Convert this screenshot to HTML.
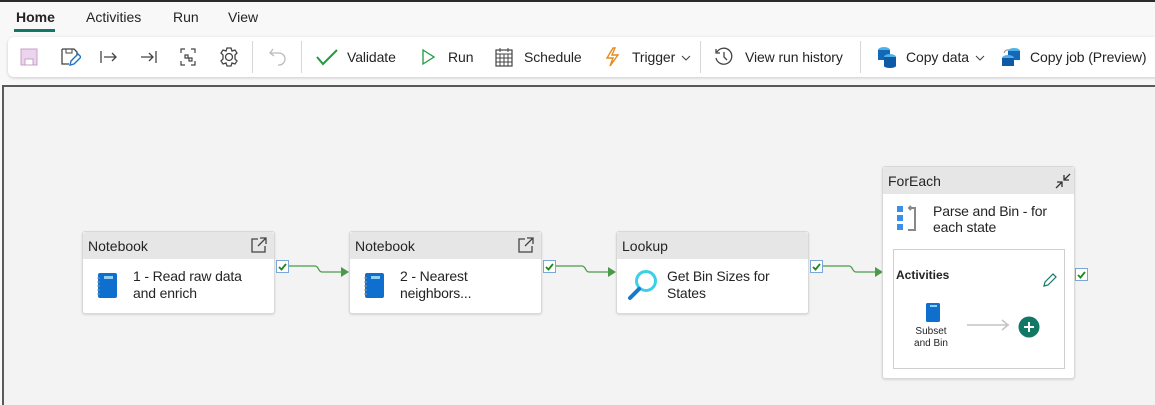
<!DOCTYPE html>
<html><head><meta charset="utf-8"><style>
*{box-sizing:border-box;margin:0;padding:0}
body{width:1155px;height:405px;overflow:hidden;background:#f8f8f8;font-family:"Liberation Sans",sans-serif;color:#242424;position:relative}
.abs{position:absolute}
.tab{position:absolute;top:9px;font-size:14px}
.tb{position:absolute;left:8px;top:37px;width:1160px;height:40px;background:#fff;border-radius:6px;box-shadow:0 1px 3px rgba(0,0,0,.18)}
.lbl{position:absolute;top:12px;font-size:14px;color:#242424;letter-spacing:-0.1px}
.sep{position:absolute;top:4px;width:1px;height:32px;background:#d6d6d6}
.canvas{position:absolute;left:2px;top:85px;width:1153px;height:320px;background:#f3f3f3;border-top:2px solid #5a5a5a;border-left:2px solid #5a5a5a}
.node{position:absolute;background:#fff;border:1px solid #d8d8d8;border-radius:3px;box-shadow:0 1px 2px rgba(0,0,0,.12)}
.hd{height:27px;background:#e6e6e6;font-size:14px;padding:6px 0 0 5px;border-radius:3px 3px 0 0}
.txt{position:absolute;left:50px;top:36px;font-size:14px;line-height:17px;letter-spacing:-0.15px}
.chk{position:absolute;width:13px;height:13px;border:1px solid #7aa7d8;background:#fff}
</style></head><body>
<div class="abs" style="left:0;top:0;width:1155px;height:2px;background:#2b2b2b"></div>
<div class="tab" style="left:16px;font-weight:bold">Home</div>
<div class="abs" style="left:14px;top:29px;width:41px;height:3px;background:#117865"></div>
<div class="tab" style="left:86px">Activities</div>
<div class="tab" style="left:173px">Run</div>
<div class="tab" style="left:228px">View</div>
<div class="tb">
<svg class="abs" style="left:11px;top:10px" width="20" height="20"><rect x="2" y="2" width="16" height="16" fill="#ecd4ec" stroke="#c9a0c9"/><rect x="6" y="12" width="8" height="6" fill="#fff" stroke="#c9a0c9"/></svg>
<svg class="abs" style="left:51px;top:9px" width="22" height="22"><path d="M3 3h12l3 3v5M3 3v15h7" fill="none" stroke="#444" stroke-width="1.3"/><path d="M7 3v4h6V3" fill="none" stroke="#444"/><path d="M11 19l1-4 7-7 3 3-7 7z" fill="#fff" stroke="#1a73c8" stroke-width="1.4"/></svg>
<svg class="abs" style="left:91px;top:12px" width="20" height="16"><path d="M2 2v12M5 8h12M13 4l4 4-4 4" fill="none" stroke="#444" stroke-width="1.3"/></svg>
<svg class="abs" style="left:131px;top:12px" width="20" height="16"><path d="M17 2v12M2 8h12M10 4l4 4-4 4" fill="none" stroke="#444" stroke-width="1.3"/></svg>
<svg class="abs" style="left:171px;top:10px" width="18" height="20"><path d="M2 6V2h4M12 2h4v4M2 14v4h4M16 14v4h-4M6 8h3v3H6zM10 11h3v3h-3z" fill="none" stroke="#444" stroke-width="1.2"/></svg>
<svg class="abs" style="left:210px;top:9px" width="22" height="22"><circle cx="11" cy="11" r="3.5" fill="none" stroke="#444" stroke-width="1.3"/><path d="M9 2h4l1 3 3-1 2 3-2 2v4l2 2-2 3-3-1-1 3H9l-1-3-3 1-2-3 2-2V9L3 7l2-3 3 1z" fill="none" stroke="#444" stroke-width="1.3"/></svg>
<div class="sep" style="left:244px"></div>
<svg class="abs" style="left:260px;top:9px" width="20" height="22"><path d="M5 3L2 7l4 3M2 7h9a6 6 0 0 1 0 12h-1" fill="none" stroke="#bbb" stroke-width="1.3"/></svg>
<div class="sep" style="left:293px"></div>
<svg class="abs" style="left:307px;top:10px" width="24" height="20"><path d="M2 10l6 7L22 3" fill="none" stroke="#1f9c3f" stroke-width="2"/></svg>
<div class="lbl" style="left:339px">Validate</div>
<svg class="abs" style="left:412px;top:10px" width="16" height="20"><path d="M3 3v14l11-7z" fill="none" stroke="#1f9c3f" stroke-width="1.3"/></svg>
<div class="lbl" style="left:440px">Run</div>
<svg class="abs" style="left:486px;top:9px" width="20" height="22"><rect x="2" y="4" width="16" height="16" fill="none" stroke="#444" stroke-width="1.2"/><path d="M2 8h16M2 12h16M2 16h16M6 8v12M10 8v12M14 8v12M6 2v4M14 2v4" stroke="#444" stroke-width="1"/></svg>
<div class="lbl" style="left:516px">Schedule</div>
<svg class="abs" style="left:595px;top:9px" width="18" height="22"><path d="M10 2L4 12h6l-3 8 8-11H9l3-7z" fill="none" stroke="#e88a1a" stroke-width="1.4"/></svg>
<div class="lbl" style="left:624px">Trigger</div>
<svg class="abs" style="left:673px;top:17px" width="10" height="8"><path d="M1 2l4 4 4-4" fill="none" stroke="#444" stroke-width="1.1"/></svg>
<div class="sep" style="left:692px"></div>
<svg class="abs" style="left:705px;top:9px" width="22" height="22"><path d="M4 6a8 8 0 1 1-1 6M3 3v4h4M11 6v5l3 3" fill="none" stroke="#444" stroke-width="1.3"/></svg>
<div class="lbl" style="left:737px">View run history</div>
<div class="sep" style="left:852px"></div>
<svg class="abs" style="left:868px;top:8px" width="22" height="24"><ellipse cx="8" cy="5" rx="6" ry="3" fill="#50b0e8"/><rect x="2" y="5" width="12" height="10" fill="#1468b8"/><ellipse cx="14" cy="12" rx="6" ry="3" fill="#50b0e8"/><rect x="8" y="12" width="12" height="9" fill="#0f5aa5"/><ellipse cx="14" cy="21" rx="6" ry="2" fill="#0f5aa5"/></svg>
<div class="lbl" style="left:898px">Copy data</div>
<svg class="abs" style="left:967px;top:17px" width="10" height="8"><path d="M1 2l4 4 4-4" fill="none" stroke="#444" stroke-width="1.1"/></svg>
<svg class="abs" style="left:992px;top:8px" width="22" height="24"><path d="M4 8a4 4 0 0 1 5-3" fill="none" stroke="#888"/><ellipse cx="14" cy="6" rx="6" ry="3" fill="#50b0e8"/><rect x="8" y="6" width="12" height="9" fill="#1468b8"/><ellipse cx="8" cy="13" rx="6" ry="3" fill="#50b0e8"/><rect x="2" y="13" width="12" height="8" fill="#0f5aa5"/></svg>
<div class="lbl" style="left:1022px">Copy job (Preview)</div>
</div>
<div class="canvas"></div>

<svg class="abs" style="left:0;top:0" width="1155" height="405">
<g fill="none" stroke="#4a9a4a" stroke-width="1.3">
<path d="M289 266h26c4 0 3 6 7 6h20"/><path d="M556 266h26c4 0 3 6 7 6h20"/><path d="M823 266h26c4 0 3 6 7 6h20"/>
</g>
<g fill="#4a9a4a"><path d="M341 267l8 5-8 5z"/><path d="M608 267l8 5-8 5z"/><path d="M875 267l8 5-8 5z"/></g>
</svg>

<div class="node" style="left:82px;top:231px;width:193px;height:83px"><div class="hd">Notebook</div>
<svg class="abs" style="left:167px;top:4px" width="18" height="18"><path d="M8 3H2v13h13v-6M10 2h6v6M16 2L8 10" fill="none" stroke="#444" stroke-width="1.3"/></svg>
<svg class="abs" style="left:12px;top:40px" width="24" height="28"><rect x="3" y="1" width="19" height="25" rx="2" fill="#0f6fcf"/><rect x="9" y="4" width="9" height="3" fill="#8fd0f5"/><path d="M2 6h3M2 10h3M2 14h3M2 18h3M2 22h3" stroke="#999"/></svg>
<div class="txt">1 - Read raw data<br>and enrich</div></div>
<div class="node" style="left:349px;top:231px;width:193px;height:83px"><div class="hd">Notebook</div>
<svg class="abs" style="left:167px;top:4px" width="18" height="18"><path d="M8 3H2v13h13v-6M10 2h6v6M16 2L8 10" fill="none" stroke="#444" stroke-width="1.3"/></svg>
<svg class="abs" style="left:12px;top:40px" width="24" height="28"><rect x="3" y="1" width="19" height="25" rx="2" fill="#0f6fcf"/><rect x="9" y="4" width="9" height="3" fill="#8fd0f5"/><path d="M2 6h3M2 10h3M2 14h3M2 18h3M2 22h3" stroke="#999"/></svg>
<div class="txt">2 - Nearest<br>neighbors...</div></div>
<div class="node" style="left:616px;top:231px;width:193px;height:83px"><div class="hd">Lookup</div>
<svg class="abs" style="left:10px;top:36px" width="32" height="34"><circle cx="19" cy="13" r="9.5" fill="none" stroke="#3ccfe8" stroke-width="3"/><path d="M12 21L3 30" stroke="#1a78c8" stroke-width="4" stroke-linecap="round"/></svg>
<div class="txt">Get Bin Sizes for<br>States</div></div>

<div class="chk" style="left:276px;top:260px"><svg width="11" height="11" style="position:absolute;left:0;top:0"><path d="M2 6l2.5 2.5L9 3" fill="none" stroke="#1a8a1a" stroke-width="1.8"/></svg></div>
<div class="chk" style="left:543px;top:260px"><svg width="11" height="11" style="position:absolute;left:0;top:0"><path d="M2 6l2.5 2.5L9 3" fill="none" stroke="#1a8a1a" stroke-width="1.8"/></svg></div>
<div class="chk" style="left:810px;top:260px"><svg width="11" height="11" style="position:absolute;left:0;top:0"><path d="M2 6l2.5 2.5L9 3" fill="none" stroke="#1a8a1a" stroke-width="1.8"/></svg></div>
<div class="chk" style="left:1075px;top:268px"><svg width="11" height="11" style="position:absolute;left:0;top:0"><path d="M2 6l2.5 2.5L9 3" fill="none" stroke="#1a8a1a" stroke-width="1.8"/></svg></div>

<div class="node" style="left:882px;top:166px;width:193px;height:213px"><div class="hd">ForEach</div>
<svg class="abs" style="left:171px;top:5px" width="18" height="18"><path d="M2 16l6-6M3 10h5v5M16 2l-6 6M10 3v5h5" fill="none" stroke="#333" stroke-width="1.3"/></svg>
<svg class="abs" style="left:12px;top:37px" width="26" height="30"><rect x="2" y="2" width="6" height="6" fill="#3a8fe6"/><rect x="2" y="11" width="6" height="6" fill="#3a8fe6"/><rect x="2" y="20" width="6" height="6" fill="#3a8fe6"/><path d="M14 4h6v22h-7M16 2l-2 2 2 2" fill="none" stroke="#888" stroke-width="2"/></svg>
<div class="txt" style="top:36px;line-height:16px">Parse and Bin - for<br>each state</div>
<div class="abs" style="left:10px;top:82px;width:172px;height:120px;border:1px solid #cfcfcf;background:#fff">
<div class="abs" style="left:2px;top:18px;font-size:12px;font-weight:bold">Activities</div>
<svg class="abs" style="left:148px;top:22px" width="16" height="16"><path d="M2 14l1-4 8-8 3 3-8 8z" fill="none" stroke="#117865" stroke-width="1.2"/></svg>
<svg class="abs" style="left:30px;top:52px" width="18" height="22"><rect x="2" y="1" width="14" height="19" rx="1.5" fill="#0f6fcf"/><rect x="6" y="3" width="7" height="2" fill="#8fd0f5"/></svg>
<div class="abs" style="left:15px;top:76px;font-size:10px;line-height:12px;text-align:center;width:44px">Subset<br>and Bin</div>
<svg class="abs" style="left:72px;top:68px" width="46" height="14"><path d="M1 7h42M36 2l6 5-6 5" fill="none" stroke="#c4c4c4" stroke-width="1.5"/></svg>
<svg class="abs" style="left:124px;top:66px" width="22" height="22"><circle cx="11" cy="11" r="10.5" fill="#117865"/><path d="M11 6v10M6 11h10" stroke="#fff" stroke-width="2"/></svg>
</div></div>
</body></html>
